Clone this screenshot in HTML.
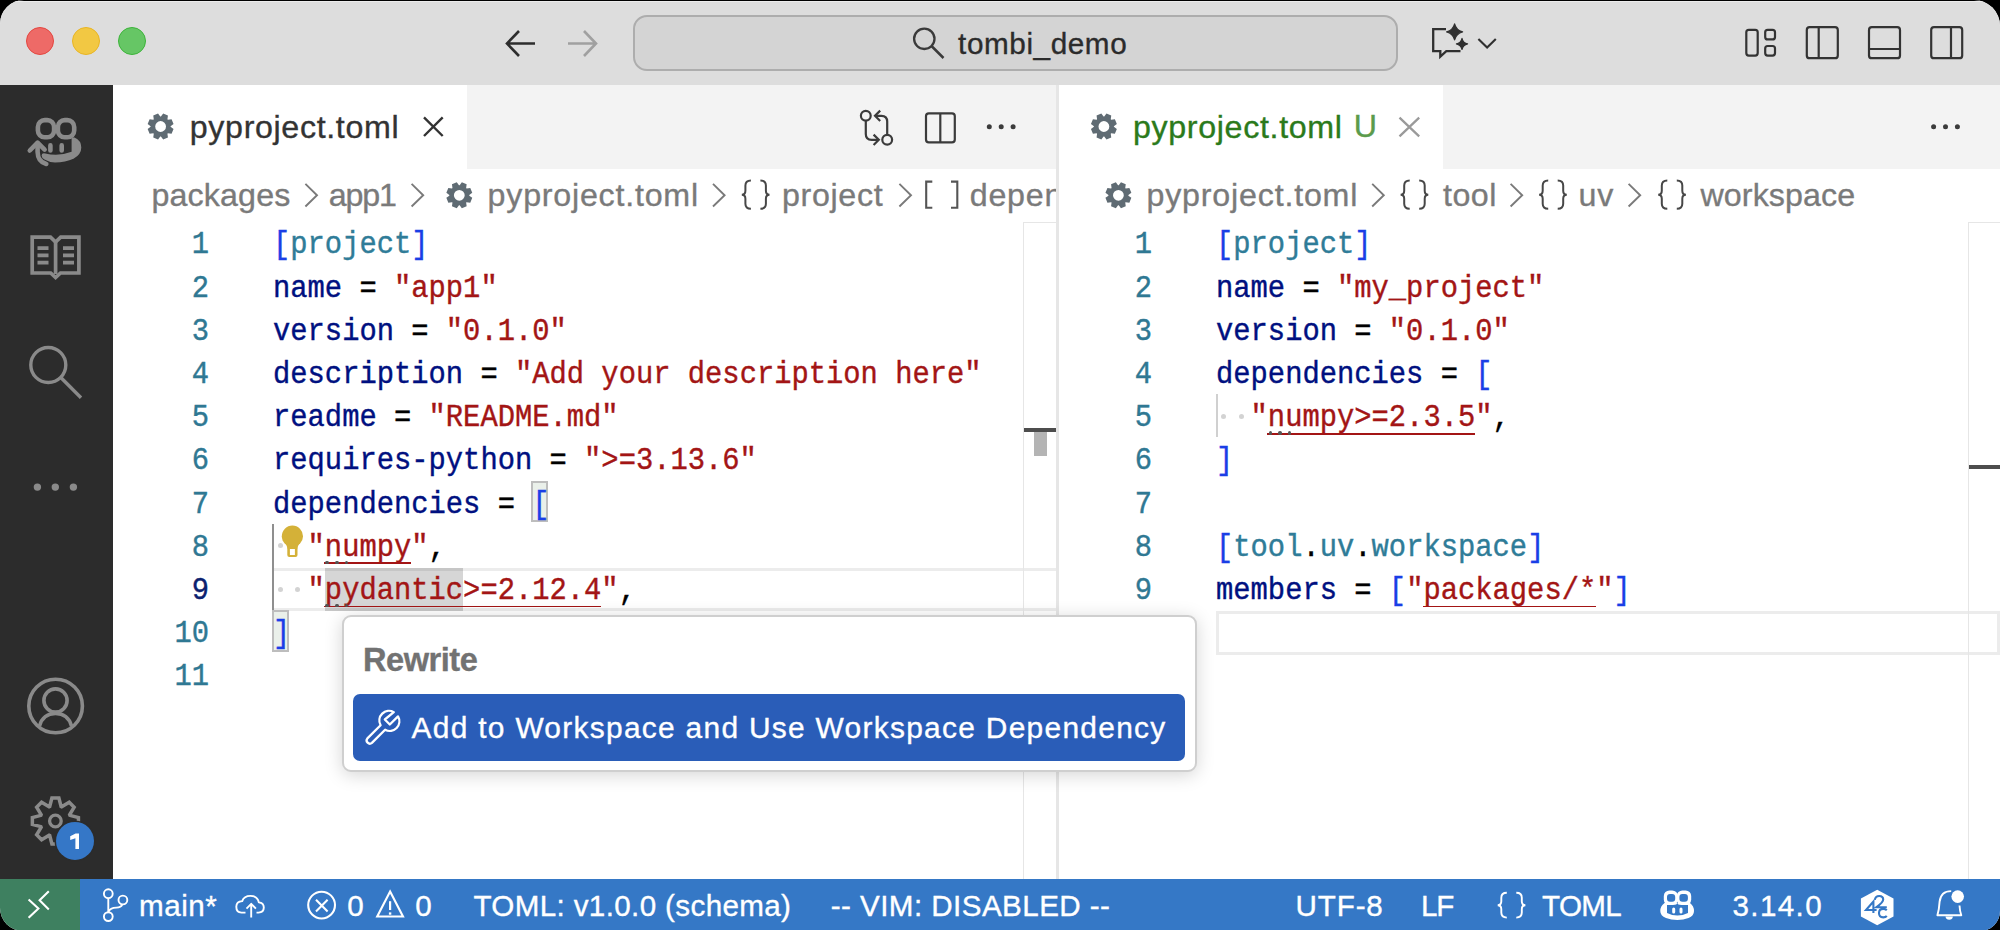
<!DOCTYPE html>
<html><head><meta charset="utf-8">
<style>
html,body{margin:0;padding:0;width:2000px;height:930px;overflow:hidden;background:#000;}
*{box-sizing:border-box;}
#win{position:absolute;left:0;top:0;width:2000px;height:931px;border-radius:24px 26px 20px 23px;overflow:hidden;background:#fff;font-family:"Liberation Sans",sans-serif;}
.abs{position:absolute;}
.cl{position:absolute;height:43.2px;line-height:43.2px;white-space:pre;font-family:"Liberation Mono",monospace;font-size:31.0px;transform:translateY(1.6px) scaleX(0.9290);transform-origin:0 0;-webkit-text-stroke:0.4px currentColor;}
.ln{position:absolute;width:100px;height:43.2px;line-height:43.2px;text-align:right;font-family:"Liberation Mono",monospace;font-size:31.0px;transform:translateY(1.6px) scaleX(0.9290);transform-origin:100% 0;-webkit-text-stroke:0.4px currentColor;}
.t{position:absolute;white-space:pre;line-height:1;-webkit-text-stroke:0.35px currentColor;}
svg{position:absolute;overflow:visible;}
</style></head><body>
<div id="win">
  <!-- title bar -->
  <div class="abs" style="left:0;top:0;width:2000px;height:85px;background:#dddddd;border-top:1px solid #000;"></div><div class="abs" style="left:0;top:1px;width:2000px;height:1px;background:#ececec;"></div>
  <!-- traffic lights -->
  <div class="abs" style="left:26px;top:27px;width:28px;height:28px;border-radius:50%;background:#ee6a67;border:1.5px solid #e4463f;"></div>
  <div class="abs" style="left:72px;top:27px;width:28px;height:28px;border-radius:50%;background:#f2c843;border:1.5px solid #e9b524;"></div>
  <div class="abs" style="left:118px;top:27px;width:28px;height:28px;border-radius:50%;background:#66c665;border:1.5px solid #3cb43a;"></div>
  <!-- nav arrows -->
  <svg style="left:0;top:0" width="2000" height="85">
    <g fill="none" stroke-width="2.6" stroke-linecap="butt">
      <path d="M507 43.5 H535 M519 31 L507 43.5 L519 56" stroke="#2d2d2d"/>
      <path d="M568 43.5 H596 M584 31 L596 43.5 L584 56" stroke="#a0a0a0"/>
    </g>
  </svg>
  <!-- search box -->
  <div class="abs" style="left:633px;top:15px;width:765px;height:56px;border-radius:14px;background:#d4d4d4;border:2px solid #adadad;"></div>
  <svg style="left:0;top:0" width="2000" height="85">
    <circle cx="924.3" cy="38.8" r="10.2" fill="none" stroke="#3a3a3a" stroke-width="2.3"/>
    <path d="M931.5 46 L943.5 58" stroke="#3a3a3a" stroke-width="2.5"/>
  </svg>

  <!-- activity bar -->
  <div class="abs" style="left:0;top:85px;width:113px;height:794px;background:#2c2c2c;"></div>

  <!-- left tab bar -->
  <div class="abs" style="left:113px;top:85px;width:943px;height:84px;background:#f3f3f3;"></div>
  <div class="abs" style="left:113px;top:85px;width:354px;height:84px;background:#ffffff;"></div>

  <!-- sash -->
  <div class="abs" style="left:1056px;top:85px;width:3px;height:794px;background:#e6e6e6;"></div>

  <!-- right tab bar -->
  <div class="abs" style="left:1059px;top:85px;width:941px;height:84px;background:#f3f3f3;"></div>
  <div class="abs" style="left:1059px;top:85px;width:384px;height:84px;background:#ffffff;"></div>

  <!-- breadcrumbs -->
  <div class="abs" style="left:1010px;top:170px;width:46px;height:50px;background:linear-gradient(90deg,rgba(255,255,255,0),#fff 90%);"></div>

  <div style="position:absolute;left:324.84000000000003px;top:567.8px;width:138.24px;height:42.900000000000006px;background:#d6d6d6"></div>
<div style="position:absolute;left:274.3px;top:567.8px;width:781.7px;height:42.900000000000006px;border-top:3.5px solid rgba(0,0,0,0.075);border-bottom:3.5px solid rgba(0,0,0,0.075);box-sizing:border-box"></div>
<div style="position:absolute;left:531.2px;top:480.6px;width:17.28px;height:41.7px;background:#eaf0ea;border:2px solid #bdbdbd;box-sizing:border-box"></div>
<div style="position:absolute;left:272.0px;top:610.2px;width:16.78px;height:41.7px;background:#eaf0ea;border:2px solid #bdbdbd;box-sizing:border-box"></div>
<div style="position:absolute;left:272px;top:523.8000000000001px;width:2.3px;height:86.4px;background:#8f8f8f"></div>
<div style="position:absolute;left:1216.2px;top:611.0px;width:783.8px;height:43.7px;border:3px solid #ececec;box-sizing:border-box"></div>
<div style="position:absolute;left:1215.7px;top:394.20000000000005px;width:2.3px;height:43.2px;background:#d0d0d0"></div>
  <div class="ln" style="left:109.00px;top:221.40px;color:#2f7893">1</div>
<div class="cl" style="left:273.00px;top:221.40px"><span style="color:#1a3ee6">[</span><span style="color:#2f7c98">project</span><span style="color:#1a3ee6">]</span></div>
<div class="ln" style="left:109.00px;top:264.60px;color:#2f7893">2</div>
<div class="cl" style="left:273.00px;top:264.60px"><span style="color:#001080">name</span><span style="color:#000000"> = </span><span style="color:#a31515">"app1"</span></div>
<div class="ln" style="left:109.00px;top:307.80px;color:#2f7893">3</div>
<div class="cl" style="left:273.00px;top:307.80px"><span style="color:#001080">version</span><span style="color:#000000"> = </span><span style="color:#a31515">"0.1.0"</span></div>
<div class="ln" style="left:109.00px;top:351.00px;color:#2f7893">4</div>
<div class="cl" style="left:273.00px;top:351.00px"><span style="color:#001080">description</span><span style="color:#000000"> = </span><span style="color:#a31515">"Add your description here"</span></div>
<div class="ln" style="left:109.00px;top:394.20px;color:#2f7893">5</div>
<div class="cl" style="left:273.00px;top:394.20px"><span style="color:#001080">readme</span><span style="color:#000000"> = </span><span style="color:#a31515">"README.md"</span></div>
<div class="ln" style="left:109.00px;top:437.40px;color:#2f7893">6</div>
<div class="cl" style="left:273.00px;top:437.40px"><span style="color:#001080">requires-python</span><span style="color:#000000"> = </span><span style="color:#a31515">"&gt;=3.13.6"</span></div>
<div class="ln" style="left:109.00px;top:480.60px;color:#2f7893">7</div>
<div class="cl" style="left:273.00px;top:480.60px"><span style="color:#001080">dependencies</span><span style="color:#000000"> = </span><span style="color:#1a3ee6">[</span></div>
<div class="ln" style="left:109.00px;top:523.80px;color:#2f7893">8</div>
<div class="cl" style="left:273.00px;top:523.80px"><span style="color:#000000">  </span><span style="color:#a31515">"numpy"</span><span style="color:#000000">,</span></div>
<div class="ln" style="left:109.00px;top:567.00px;color:#0b216f">9</div>
<div class="cl" style="left:273.00px;top:567.00px"><span style="color:#000000">  </span><span style="color:#a31515">"pydantic&gt;=2.12.4"</span><span style="color:#000000">,</span></div>
<div class="ln" style="left:109.00px;top:610.20px;color:#2f7893">10</div>
<div class="cl" style="left:273.00px;top:610.20px"><span style="color:#1a3ee6">]</span></div>
<div class="ln" style="left:109.00px;top:653.40px;color:#2f7893">11</div>
<div class="ln" style="left:1052.00px;top:221.40px;color:#2f7893">1</div>
<div class="cl" style="left:1216.20px;top:221.40px"><span style="color:#1a3ee6">[</span><span style="color:#2f7c98">project</span><span style="color:#1a3ee6">]</span></div>
<div class="ln" style="left:1052.00px;top:264.60px;color:#2f7893">2</div>
<div class="cl" style="left:1216.20px;top:264.60px"><span style="color:#001080">name</span><span style="color:#000000"> = </span><span style="color:#a31515">"my_project"</span></div>
<div class="ln" style="left:1052.00px;top:307.80px;color:#2f7893">3</div>
<div class="cl" style="left:1216.20px;top:307.80px"><span style="color:#001080">version</span><span style="color:#000000"> = </span><span style="color:#a31515">"0.1.0"</span></div>
<div class="ln" style="left:1052.00px;top:351.00px;color:#2f7893">4</div>
<div class="cl" style="left:1216.20px;top:351.00px"><span style="color:#001080">dependencies</span><span style="color:#000000"> = </span><span style="color:#1a3ee6">[</span></div>
<div class="ln" style="left:1052.00px;top:394.20px;color:#2f7893">5</div>
<div class="cl" style="left:1216.20px;top:394.20px"><span style="color:#000000">  </span><span style="color:#a31515">"numpy&gt;=2.3.5"</span><span style="color:#000000">,</span></div>
<div class="ln" style="left:1052.00px;top:437.40px;color:#2f7893">6</div>
<div class="cl" style="left:1216.20px;top:437.40px"><span style="color:#1a3ee6">]</span></div>
<div class="ln" style="left:1052.00px;top:480.60px;color:#2f7893">7</div>
<div class="ln" style="left:1052.00px;top:523.80px;color:#2f7893">8</div>
<div class="cl" style="left:1216.20px;top:523.80px"><span style="color:#1a3ee6">[</span><span style="color:#2f7c98">tool</span><span style="color:#000000">.</span><span style="color:#2f7c98">uv</span><span style="color:#000000">.</span><span style="color:#2f7c98">workspace</span><span style="color:#1a3ee6">]</span></div>
<div class="ln" style="left:1052.00px;top:567.00px;color:#2f7893">9</div>
<div class="cl" style="left:1216.20px;top:567.00px"><span style="color:#001080">members</span><span style="color:#000000"> = </span><span style="color:#1a3ee6">[</span><span style="color:#a31515">"packages/*"</span><span style="color:#1a3ee6">]</span></div>
<div style="position:absolute;left:278.14px;top:543.4000000000001px;width:5px;height:5px;background:#d3d3d3;border-radius:50%"></div><div style="position:absolute;left:278.14px;top:586.6px;width:5px;height:5px;background:#d3d3d3;border-radius:50%"></div><div style="position:absolute;left:295.41999999999996px;top:586.6px;width:5px;height:5px;background:#d3d3d3;border-radius:50%"></div><div style="position:absolute;left:1221.3400000000001px;top:413.80000000000007px;width:5px;height:5px;background:#d3d3d3;border-radius:50%"></div><div style="position:absolute;left:1238.6200000000001px;top:413.80000000000007px;width:5px;height:5px;background:#d3d3d3;border-radius:50%"></div>
<div style="position:absolute;left:323.84000000000003px;top:562.4000000000001px;width:87.4px;height:1.8px;background:#a31515"></div>
<div style="position:absolute;left:323.84000000000003px;top:605.6px;width:277.48px;height:1.8px;background:#a31515"></div>
<div style="position:absolute;left:1267.04px;top:432.80000000000007px;width:208.36px;height:1.8px;background:#a31515"></div>
<div style="position:absolute;left:1422.56px;top:605.6px;width:173.8px;height:1.8px;background:#a31515"></div>
<div style="position:absolute;left:325.34000000000003px;top:560.6px;width:3.6px;height:3.6px;background:#555;border-radius:50%"></div><div style="position:absolute;left:334.94000000000005px;top:560.6px;width:3.6px;height:3.6px;background:#555;border-radius:50%"></div><div style="position:absolute;left:344.54px;top:560.6px;width:3.6px;height:3.6px;background:#555;border-radius:50%"></div>
<div style="position:absolute;left:325.34000000000003px;top:603.8px;width:3.6px;height:3.6px;background:#555;border-radius:50%"></div><div style="position:absolute;left:334.94000000000005px;top:603.8px;width:3.6px;height:3.6px;background:#555;border-radius:50%"></div><div style="position:absolute;left:344.54px;top:603.8px;width:3.6px;height:3.6px;background:#555;border-radius:50%"></div>
<div style="position:absolute;left:1268.54px;top:431.00000000000006px;width:3.6px;height:3.6px;background:#555;border-radius:50%"></div><div style="position:absolute;left:1278.1399999999999px;top:431.00000000000006px;width:3.6px;height:3.6px;background:#555;border-radius:50%"></div><div style="position:absolute;left:1287.74px;top:431.00000000000006px;width:3.6px;height:3.6px;background:#555;border-radius:50%"></div>
  <!-- overview rulers -->
  <div class="abs" style="left:1023px;top:222px;width:33px;height:657px;border-left:1.5px solid #e6e6e6;border-top:1.5px solid #e6e6e6;"></div>
  <div class="abs" style="left:1024px;top:428px;width:32px;height:4px;background:#4d4d4d;"></div>
  <div class="abs" style="left:1034px;top:432px;width:13px;height:24px;background:#b4b4b4;"></div>
  <div class="abs" style="left:1968px;top:222px;width:32px;height:657px;border-left:1.5px solid #e6e6e6;border-top:1.5px solid #e6e6e6;"></div>
  <div class="abs" style="left:1969px;top:464.5px;width:31px;height:4px;background:#4d4d4d;"></div>


  <!-- hover widget -->
  <div class="abs" style="left:342px;top:615px;width:855px;height:157px;background:#fff;border:2px solid #cfcfcf;border-radius:9px;box-shadow:0 3px 18px rgba(0,0,0,0.17);"></div>
  <div class="abs" style="left:353px;top:694px;width:832px;height:67px;background:#2a5db8;border-radius:7px;"></div>

  <!-- status bar -->
  <div class="abs" style="left:80px;top:879px;width:1920px;height:55px;background:#3578c6;"></div>
  <div class="abs" style="left:0;top:879px;width:80px;height:55px;background:#3e8060;"></div>

  <div class="t" id="title" style="left:958.10px;top:28.75px;font-size:29.7px;font-weight:normal;letter-spacing:0.578px;color:#2b2b2b">tombi_demo</div>
<div class="t" id="tab1" style="left:189.80px;top:110.94px;font-size:32.2px;font-weight:normal;letter-spacing:0.646px;color:#333333">pyproject.toml</div>
<div class="t" id="tab2" style="left:1132.90px;top:110.94px;font-size:32.2px;font-weight:normal;letter-spacing:0.669px;color:#2b7a1b">pyproject.toml</div>
<div class="t" id="tabU" style="left:1353.80px;top:110.34px;font-size:32.2px;font-weight:normal;letter-spacing:0.000px;color:#5b9b4c">U</div>
<div class="t" id="bc1" style="left:151.55px;top:178.79px;font-size:32.2px;font-weight:normal;letter-spacing:0.136px;color:#7a7a7a">packages</div>
<div class="t" id="bc2" style="left:328.80px;top:178.79px;font-size:32.2px;font-weight:normal;letter-spacing:-1.200px;color:#7a7a7a">app1</div>
<div class="t" id="bc3" style="left:487.60px;top:178.79px;font-size:32.2px;font-weight:normal;letter-spacing:0.777px;color:#7a7a7a">pyproject.toml</div>
<div class="t" id="bc4" style="left:782.00px;top:178.79px;font-size:32.2px;font-weight:normal;letter-spacing:0.667px;color:#7a7a7a">project</div>
<div class="abs" style="left:0;top:0;width:1056px;height:240px;overflow:hidden"><div class="t" id="bc5" style="left:969.70px;top:178.79px;font-size:32.2px;font-weight:normal;letter-spacing:0.800px;color:#7a7a7a">depen</div></div>
<div class="t" id="bc6" style="left:1146.50px;top:178.79px;font-size:32.2px;font-weight:normal;letter-spacing:0.808px;color:#7a7a7a">pyproject.toml</div>
<div class="t" id="bc7" style="left:1443.00px;top:178.79px;font-size:32.2px;font-weight:normal;letter-spacing:0.467px;color:#7a7a7a">tool</div>
<div class="t" id="bc8" style="left:1578.60px;top:178.79px;font-size:32.2px;font-weight:normal;letter-spacing:0.800px;color:#7a7a7a">uv</div>
<div class="t" id="bc9" style="left:1700.40px;top:178.79px;font-size:32.2px;font-weight:normal;letter-spacing:0.125px;color:#7a7a7a">workspace</div>
<div class="t" id="rewrite" style="left:363.00px;top:644.25px;font-size:32.6px;font-weight:bold;letter-spacing:-0.483px;color:#727272">Rewrite</div>
<div class="t" id="btn" style="left:411.60px;top:713.48px;font-size:29.9px;font-weight:normal;letter-spacing:1.295px;color:#ffffff">Add to Workspace and Use Workspace Dependency</div>
<div class="t" id="sb1" style="left:139.00px;top:890.94px;font-size:29.6px;font-weight:normal;letter-spacing:0.550px;color:#ffffff">main*</div>
<div class="t" id="sb2" style="left:347.35px;top:890.94px;font-size:29.6px;font-weight:normal;letter-spacing:0.000px;color:#ffffff">0</div>
<div class="t" id="sb3" style="left:415.20px;top:890.94px;font-size:29.6px;font-weight:normal;letter-spacing:0.000px;color:#ffffff">0</div>
<div class="t" id="sb4" style="left:473.40px;top:890.94px;font-size:29.6px;font-weight:normal;letter-spacing:0.365px;color:#ffffff">TOML: v1.0.0 (schema)</div>
<div class="t" id="sb5" style="left:830.70px;top:890.94px;font-size:29.6px;font-weight:normal;letter-spacing:0.444px;color:#ffffff">-- VIM: DISABLED --</div>
<div class="t" id="sb6" style="left:1295.60px;top:890.94px;font-size:29.6px;font-weight:normal;letter-spacing:0.850px;color:#ffffff">UTF-8</div>
<div class="t" id="sb7" style="left:1421.05px;top:890.94px;font-size:29.6px;font-weight:normal;letter-spacing:-1.200px;color:#ffffff">LF</div>
<div class="t" id="sb8" style="left:1542.00px;top:890.94px;font-size:29.6px;font-weight:normal;letter-spacing:-0.667px;color:#ffffff">TOML</div>
<div class="t" id="sb9" style="left:1732.50px;top:890.94px;font-size:29.6px;font-weight:normal;letter-spacing:1.380px;color:#ffffff">3.14.0</div>
  <svg style="left:0;top:0" width="2000" height="930"><g fill="none" stroke="#303030" stroke-width="2.3" stroke-linejoin="miter"><path d="M1446 29.2 H1433.2 V51.2 H1440.3 V56.6 L1446.3 51.2 H1460.5"/><path d="M1478.4 39 L1487.1 47.6 L1495.8 39" stroke-width="2.1"/></g>
<path d="M1454.60 23.80 Q1456.20 30.20 1462.60 31.80 Q1456.20 33.40 1454.60 39.80 Q1453.00 33.40 1446.60 31.80 Q1453.00 30.20 1454.60 23.80 Z" fill="#dddddd" stroke="#dddddd" stroke-width="4"/>
<path d="M1462.00 38.30 Q1463.12 42.78 1467.60 43.90 Q1463.12 45.02 1462.00 49.50 Q1460.88 45.02 1456.40 43.90 Q1460.88 42.78 1462.00 38.30 Z" fill="#dddddd" stroke="#dddddd" stroke-width="4"/>
<path d="M1454.60 23.80 Q1456.20 30.20 1462.60 31.80 Q1456.20 33.40 1454.60 39.80 Q1453.00 33.40 1446.60 31.80 Q1453.00 30.20 1454.60 23.80 Z" fill="#303030" stroke="#303030" stroke-width="1.2" stroke-linejoin="round"/>
<path d="M1462.00 38.30 Q1463.12 42.78 1467.60 43.90 Q1463.12 45.02 1462.00 49.50 Q1460.88 45.02 1456.40 43.90 Q1460.88 42.78 1462.00 38.30 Z" fill="#303030" stroke="#303030" stroke-width="1.1" stroke-linejoin="round"/>
<g fill="none" stroke="#333333" stroke-width="2.2"><rect x="1746.3" y="29.8" width="11.4" height="25.8" rx="2.5"/><rect x="1765.2" y="29.8" width="9.8" height="9.6" rx="2.5"/><rect x="1765.2" y="46" width="9.8" height="9.6" rx="2.5"/><rect x="1806.8" y="27.2" width="31" height="31" rx="2.8"/><path d="M1818.7 27.2 V58.2"/><rect x="1869" y="27.2" width="31" height="31" rx="2.8"/><path d="M1869 49 H1900"/><rect x="1931.2" y="27.2" width="31" height="31" rx="2.8"/><path d="M1951 27.2 V58.2"/></g>
<path d="M160.93 116.51 L163.17 113.55 L167.94 115.53 L167.44 119.20 L167.90 119.66 L171.57 119.16 L173.55 123.93 L170.59 126.17 L170.59 126.83 L173.55 129.07 L171.57 133.84 L167.90 133.34 L167.44 133.80 L167.94 137.47 L163.17 139.45 L160.93 136.49 L160.27 136.49 L158.03 139.45 L153.26 137.47 L153.76 133.80 L153.30 133.34 L149.63 133.84 L147.65 129.07 L150.61 126.83 L150.61 126.17 L147.65 123.93 L149.63 119.16 L153.30 119.66 L153.76 119.20 L153.26 115.53 L158.03 113.55 L160.27 116.51 Z M166.00 126.50 A5.4 5.4 0 1 0 155.20 126.50 A5.4 5.4 0 1 0 166.00 126.50 Z" fill="#5f6b73" fill-rule="evenodd"/>
<path d="M424 117.4 L442.7 136 M442.7 117.4 L424 136" stroke="#333" stroke-width="2.4"/>
<g fill="none" stroke="#3b3b3b" stroke-width="2.2"><circle cx="865.8" cy="115.8" r="4.9"/><circle cx="887.2" cy="139.8" r="4.9"/><path d="M865.8 120.7 V134 Q865.8 139.8 871.6 139.8 H878"/><path d="M873.6 134.6 L878.8 139.8 L873.6 145"/><path d="M887.2 134.9 V121.6 Q887.2 115.8 881.4 115.8 H875"/><path d="M880.2 110.6 L875 115.8 L880.2 121"/><rect x="926" y="113.3" width="28.8" height="29" rx="2.8"/><path d="M940.3 113.3 V142.3"/></g>
<circle cx="989.3" cy="126.7" r="2.5" fill="#3b3b3b"/>
<circle cx="1001.2" cy="126.7" r="2.5" fill="#3b3b3b"/>
<circle cx="1013.1" cy="126.7" r="2.5" fill="#3b3b3b"/>
<path d="M1104.23 116.51 L1106.47 113.55 L1111.24 115.53 L1110.74 119.20 L1111.20 119.66 L1114.87 119.16 L1116.85 123.93 L1113.89 126.17 L1113.89 126.83 L1116.85 129.07 L1114.87 133.84 L1111.20 133.34 L1110.74 133.80 L1111.24 137.47 L1106.47 139.45 L1104.23 136.49 L1103.57 136.49 L1101.33 139.45 L1096.56 137.47 L1097.06 133.80 L1096.60 133.34 L1092.93 133.84 L1090.95 129.07 L1093.91 126.83 L1093.91 126.17 L1090.95 123.93 L1092.93 119.16 L1096.60 119.66 L1097.06 119.20 L1096.56 115.53 L1101.33 113.55 L1103.57 116.51 Z M1109.30 126.50 A5.4 5.4 0 1 0 1098.50 126.50 A5.4 5.4 0 1 0 1109.30 126.50 Z" fill="#5f6b73" fill-rule="evenodd"/>
<path d="M1399.5 117.6 L1419.2 136.4 M1419.2 117.6 L1399.5 136.4" stroke="#9a9a9a" stroke-width="2.3"/>
<circle cx="1933.6" cy="126.7" r="2.5" fill="#3b3b3b"/>
<circle cx="1945.5" cy="126.7" r="2.5" fill="#3b3b3b"/>
<circle cx="1957.4" cy="126.7" r="2.5" fill="#3b3b3b"/>
<path d="M305.4 183.9 L317.0 195.2 L305.4 206.5" fill="none" stroke="#7a7a7a" stroke-width="1.9"/>
<path d="M411.6 183.9 L423.2 195.2 L411.6 206.5" fill="none" stroke="#7a7a7a" stroke-width="1.9"/>
<path d="M713.0 183.9 L724.6 195.2 L713.0 206.5" fill="none" stroke="#7a7a7a" stroke-width="1.9"/>
<path d="M899.4 183.9 L911.0 195.2 L899.4 206.5" fill="none" stroke="#7a7a7a" stroke-width="1.9"/>
<path d="M1372.2 183.9 L1383.8 195.2 L1372.2 206.5" fill="none" stroke="#7a7a7a" stroke-width="1.9"/>
<path d="M1510.6 183.9 L1522.2 195.2 L1510.6 206.5" fill="none" stroke="#7a7a7a" stroke-width="1.9"/>
<path d="M1628.6 183.9 L1640.2 195.2 L1628.6 206.5" fill="none" stroke="#7a7a7a" stroke-width="1.9"/>
<path d="M459.63 185.31 L461.87 182.35 L466.64 184.33 L466.14 188.00 L466.60 188.46 L470.27 187.96 L472.25 192.73 L469.29 194.97 L469.29 195.63 L472.25 197.87 L470.27 202.64 L466.60 202.14 L466.14 202.60 L466.64 206.27 L461.87 208.25 L459.63 205.29 L458.97 205.29 L456.73 208.25 L451.96 206.27 L452.46 202.60 L452.00 202.14 L448.33 202.64 L446.35 197.87 L449.31 195.63 L449.31 194.97 L446.35 192.73 L448.33 187.96 L452.00 188.46 L452.46 188.00 L451.96 184.33 L456.73 182.35 L458.97 185.31 Z M464.70 195.30 A5.4 5.4 0 1 0 453.90 195.30 A5.4 5.4 0 1 0 464.70 195.30 Z" fill="#5f6b73" fill-rule="evenodd"/>
<path d="M1118.73 185.31 L1120.97 182.35 L1125.74 184.33 L1125.24 188.00 L1125.70 188.46 L1129.37 187.96 L1131.35 192.73 L1128.39 194.97 L1128.39 195.63 L1131.35 197.87 L1129.37 202.64 L1125.70 202.14 L1125.24 202.60 L1125.74 206.27 L1120.97 208.25 L1118.73 205.29 L1118.07 205.29 L1115.83 208.25 L1111.06 206.27 L1111.56 202.60 L1111.10 202.14 L1107.43 202.64 L1105.45 197.87 L1108.41 195.63 L1108.41 194.97 L1105.45 192.73 L1107.43 187.96 L1111.10 188.46 L1111.56 188.00 L1111.06 184.33 L1115.83 182.35 L1118.07 185.31 Z M1123.80 195.30 A5.4 5.4 0 1 0 1113.00 195.30 A5.4 5.4 0 1 0 1123.80 195.30 Z" fill="#5f6b73" fill-rule="evenodd"/>
<path d="M750.9 180.6 Q745.4 180.6 745.4 185.6 V190.7 Q745.4 194.7 741.8 194.7 Q745.4 194.7 745.4 198.7 V203.8 Q745.4 208.8 750.9 208.8 M760.4 180.6 Q765.9 180.6 765.9 185.6 V190.7 Q765.9 194.7 769.5 194.7 Q765.9 194.7 765.9 198.7 V203.8 Q765.9 208.8 760.4 208.8" fill="none" stroke="#474747" stroke-width="2.0"/>
<path d="M1409.7 180.6 Q1404.2 180.6 1404.2 185.6 V190.7 Q1404.2 194.7 1400.6 194.7 Q1404.2 194.7 1404.2 198.7 V203.8 Q1404.2 208.8 1409.7 208.8 M1419.2 180.6 Q1424.7 180.6 1424.7 185.6 V190.7 Q1424.7 194.7 1428.3 194.7 Q1424.7 194.7 1424.7 198.7 V203.8 Q1424.7 208.8 1419.2 208.8" fill="none" stroke="#474747" stroke-width="2.0"/>
<path d="M1548.2 180.6 Q1542.7 180.6 1542.7 185.6 V190.7 Q1542.7 194.7 1539.1 194.7 Q1542.7 194.7 1542.7 198.7 V203.8 Q1542.7 208.8 1548.2 208.8 M1557.7 180.6 Q1563.2 180.6 1563.2 185.6 V190.7 Q1563.2 194.7 1566.8 194.7 Q1563.2 194.7 1563.2 198.7 V203.8 Q1563.2 208.8 1557.7 208.8" fill="none" stroke="#474747" stroke-width="2.0"/>
<path d="M1667.3 180.6 Q1661.8 180.6 1661.8 185.6 V190.7 Q1661.8 194.7 1658.2 194.7 Q1661.8 194.7 1661.8 198.7 V203.8 Q1661.8 208.8 1667.3 208.8 M1676.8 180.6 Q1682.3 180.6 1682.3 185.6 V190.7 Q1682.3 194.7 1685.9 194.7 Q1682.3 194.7 1682.3 198.7 V203.8 Q1682.3 208.8 1676.8 208.8" fill="none" stroke="#474747" stroke-width="2.0"/>
<path d="M932.3 181.6 H926.2 V207.8 H932.3 M951 181.6 H957.3 V207.8 H951" fill="none" stroke="#555" stroke-width="2.1"/>
<g fill="none" stroke="#8a8a8a" stroke-width="4.6" stroke-linecap="round" stroke-linejoin="round"><rect x="37.9" y="120.1" width="16.2" height="17.2" rx="6.8"/><rect x="57.9" y="120.1" width="16.3" height="17.2" rx="6.8"/><path d="M37.6 144 V152 Q37.8 161.8 46.3 164"/><path d="M29.8 150.5 L37.6 142.6 L44.6 149.6"/><path d="M50.4 145.4 V150.4 M61.7 145.4 V150.4"/></g>
<path d="M71.6 137.5 L74.5 137.5 Q81.3 140.5 81.3 147.5 Q81.3 154.5 73.5 158.8 Q65.5 162.4 55 162.4 Q49 162.4 44.5 159.6 Q41.5 157.8 41.6 155.6 Q41.8 152.6 45.2 153.4 Q58.5 156.8 71.6 151.8 Z" fill="#8a8a8a"/>
<g fill="none" stroke="#8a8a8a" stroke-width="3.7"><path d="M50.5 237.2 H32.2 V273 H50.7 L55.6 277.5 L60.5 273 H78.9 V237.2 H60.7 L55.6 242 Z"/><path d="M55.6 242 V274"/><path d="M37.5 248.1 H48.5 M37.5 255.4 H48.5 M37.5 262.6 H48.5 M63 248.1 H74 M63 255.4 H74 M63 262.6 H74"/></g>
<g fill="none" stroke="#8a8a8a" stroke-width="3.4"><circle cx="48.3" cy="365" r="17.5"/><path d="M60.8 377.5 L81 397.8"/></g>
<circle cx="37.4" cy="487.1" r="3.7" fill="#8a8a8a"/>
<circle cx="55.3" cy="487.1" r="3.7" fill="#8a8a8a"/>
<circle cx="73.4" cy="487.1" r="3.7" fill="#8a8a8a"/>
<g fill="none" stroke="#8a8a8a" stroke-width="3.6"><circle cx="55.6" cy="706" r="26.8"/><circle cx="55.5" cy="700.5" r="11.6"/><path d="M39.5 726 Q43 713.5 55.5 713.5 Q68 713.5 71.5 726"/></g>
<path d="M49.73 806.47 L51.91 797.96 L58.89 797.96 L61.07 806.47 L61.67 806.72 L69.22 802.24 L74.16 807.18 L69.68 814.73 L69.93 815.33 L78.44 817.51 L78.44 824.49 L69.93 826.67 L69.68 827.27 L74.16 834.82 L69.22 839.76 L61.67 835.28 L61.07 835.53 L58.89 844.04 L51.91 844.04 L49.73 835.53 L49.13 835.28 L41.58 839.76 L36.64 834.82 L41.12 827.27 L40.87 826.67 L32.36 824.49 L32.36 817.51 L40.87 815.33 L41.12 814.73 L36.64 807.18 L41.58 802.24 L49.13 806.72 Z" fill="none" stroke="#8a8a8a" stroke-width="3.5" stroke-linejoin="miter"/>
<circle cx="55.4" cy="821" r="5.8" fill="none" stroke="#8a8a8a" stroke-width="3.3"/>
<circle cx="75" cy="840.9" r="20.5" fill="#2c2c2c"/><circle cx="75" cy="840.9" r="19" fill="#3577c7"/>
<path d="M70.2 836.2 L75.6 833.4 H79 V849 H75.4 V838.2 L70.2 840 Z" fill="#fff"/>
<g fill="#d4b138"><circle cx="292.4" cy="536.2" r="10.6"/><path d="M284 541 Q287.3 546 287.3 548.5 H297.5 Q297.5 546 300.8 541 Z"/><path d="M287.3 547.5 H297.5 V555 Q297.5 557 295.5 557 H289.3 Q287.3 557 287.3 555 Z"/></g><rect x="289.9" y="549" width="5" height="6" fill="#fff"/>
<g fill="none" stroke="#fff" stroke-width="2.3" stroke-linejoin="round"><path d="M393.8 712.2 A9.6 9.6 0 0 0 380.6 725.2 L367.4 738.4 A3.2 3.2 0 0 0 371.9 742.9 L385.1 729.7 A9.6 9.6 0 0 0 398 716.4 L389.8 724.5 L384.8 719.5 Z"/></g>
<path d="M28.6 899.5 L38.4 908.6 L28.6 917.8 M48.8 891.2 L39.6 900.3 L48.8 909.4" fill="none" stroke="#ffffff" stroke-width="2.1"/>
<g fill="none" stroke="#ffffff" stroke-width="1.9"><circle cx="108.3" cy="893.7" r="4.4"/><circle cx="108.3" cy="916.6" r="4.4"/><circle cx="122.9" cy="900" r="4.4"/><path d="M108.3 898.1 V912.2 M122.3 904.4 Q121 907.6 116.5 907.6 Q110 907.6 108.6 911.8"/></g>
<g fill="none" stroke="#ffffff" stroke-width="1.9" stroke-linejoin="round"><path d="M245.5 912.6 H241.5 Q236.3 912.6 236.3 906.8 Q236.3 901.4 242.2 901.1 Q244 895.9 250.5 895.9 Q257.6 895.9 258.8 902.4 Q263.8 902.8 263.8 907.6 Q263.8 912.6 258.5 912.6 H256.5"/><path d="M251.2 917.6 V904 M246.5 908.6 L251.2 903.8 L255.9 908.6"/></g>
<g fill="none" stroke="#ffffff" stroke-width="2.1"><circle cx="321.6" cy="905.1" r="13.4"/><path d="M316 899.8 L327.6 911.4 M327.6 899.8 L316 911.4"/></g>
<path d="M390.1 891.5 L403 916.5 H377.2 Z" fill="none" stroke="#ffffff" stroke-width="2.1" stroke-linejoin="miter"/><path d="M390.1 901.2 V910" stroke="#ffffff" stroke-width="2.2"/><rect x="388.9" y="912.4" width="2.4" height="2.3" fill="#ffffff"/>
<path d="M1506.8 892.8 Q1501.3 892.8 1501.3 897.8 V901.2 Q1501.3 905.2 1497.7 905.2 Q1501.3 905.2 1501.3 909.2 V912.6 Q1501.3 917.6 1506.8 917.6 M1516.3 892.8 Q1521.8 892.8 1521.8 897.8 V901.2 Q1521.8 905.2 1525.4 905.2 Q1521.8 905.2 1521.8 909.2 V912.6 Q1521.8 917.6 1516.3 917.6" fill="none" stroke="#ffffff" stroke-width="1.9"/>
<g fill="#ffffff"><rect x="1663.8" y="890.4" width="14" height="14.8" rx="5.6"/><rect x="1676.8" y="890.4" width="14.4" height="14.8" rx="5.6"/><path d="M1664.5 903 Q1660.3 906 1660.3 911 Q1660.3 916 1666 918 Q1671 920 1677.3 920 Q1683.5 920 1688.5 918 Q1694 916 1694 911 Q1694 906 1690 903 Z"/></g><g fill="#3578c6"><rect x="1667" y="893.9" width="8.2" height="7.9" rx="3"/><rect x="1679.4" y="893.9" width="8.5" height="7.9" rx="3"/><path d="M1667 904.9 H1673 Q1677.3 904.9 1677.3 902.4 Q1677.3 904.9 1681.6 904.9 H1688 V913 Q1677.3 918.2 1667 913 Z"/></g><g fill="#ffffff"><rect x="1672.2" y="907.5" width="3" height="5.9" rx="1.5"/><rect x="1679.5" y="907.5" width="3" height="5.9" rx="1.5"/></g>
<path d="M1877.2 889.7 L1893.5 898.5 V916.6 L1877.2 925.2 L1860.9 916.6 V898.5 Z" fill="#ffffff"/><g fill="none" stroke="#3578c6" stroke-width="2.1" stroke-linejoin="miter"><path d="M1873.4 913 V901.5 L1866 910 H1876.6"/><path d="M1874.8 899.8 Q1875.4 896 1879.2 896 Q1883.2 896 1883.2 899.6 Q1883.2 902.6 1876.2 907.3 H1886.8"/><path d="M1886.8 910.2 Q1885.6 908.9 1883.2 908.9 Q1879 908.9 1879 913.1 Q1879 917.4 1883.2 917.4 Q1885.6 917.4 1886.8 916"/></g>
<g fill="none" stroke="#ffffff" stroke-width="1.9" stroke-linejoin="round"><path d="M1951.2 891.1 Q1940.8 891.1 1939.6 901.6 Q1939.2 909 1937.4 915.3 H1961.3 Q1959.8 911 1959.5 905.5"/></g><path d="M1945.5 916.5 Q1946 919.8 1949.2 919.8 Q1952.4 919.8 1952.9 916.5 Z" fill="#ffffff"/><circle cx="1957.7" cy="896.6" r="6.3" fill="#ffffff"/></svg>
</div>
</body></html>
